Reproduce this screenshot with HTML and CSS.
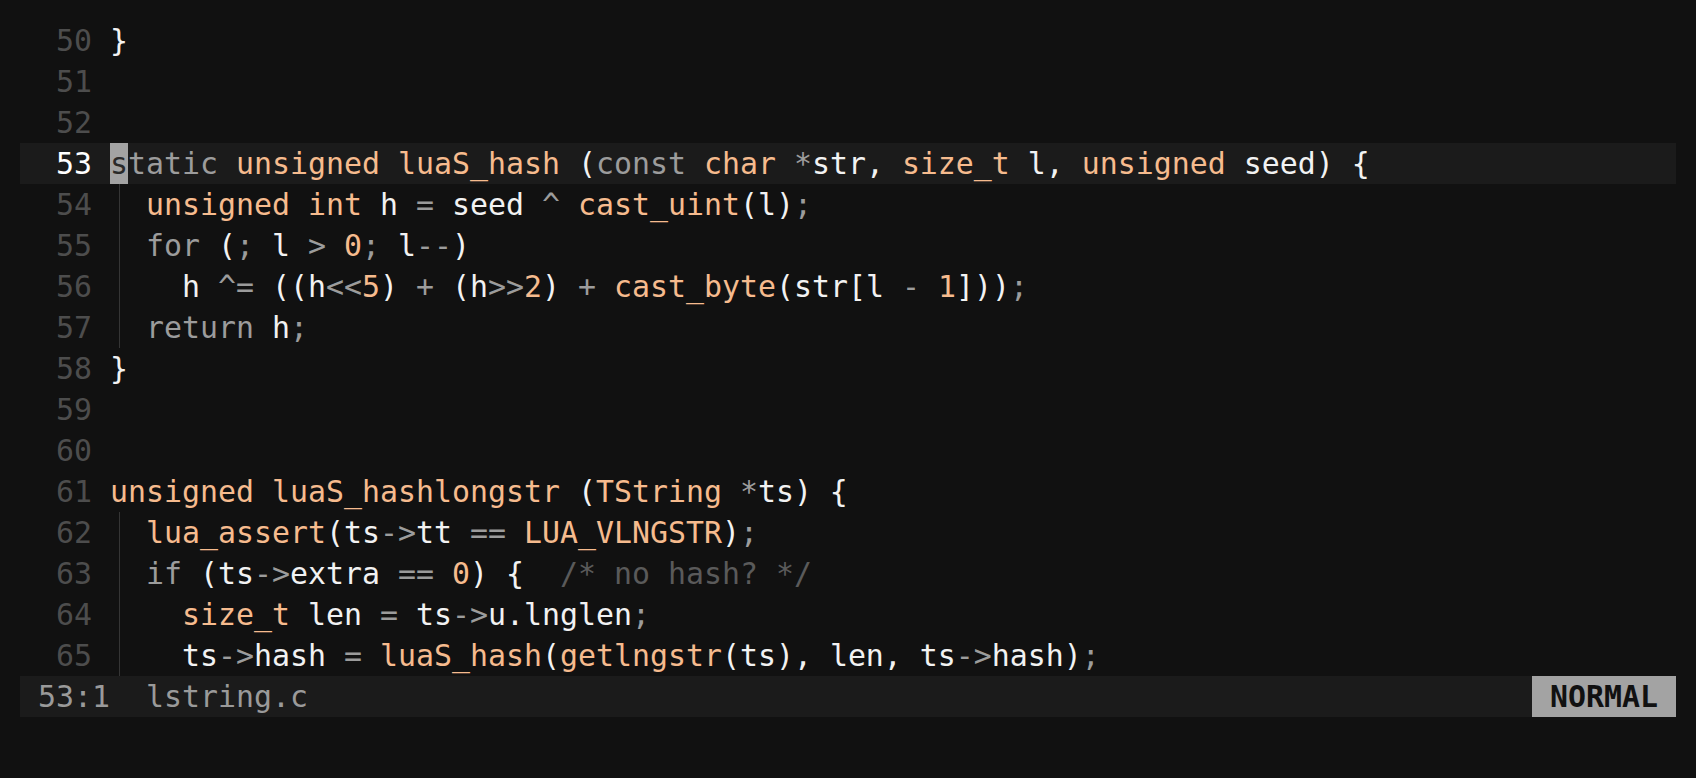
FILE: index.html
```html
<!DOCTYPE html>
<html>
<head>
<meta charset="utf-8">
<link rel="stylesheet" href="styles.css">
</head>
<body>
<div class="editor">
  <div class="buffer">
    <div class="row"><span class="ln">50 </span><span class="code">}</span></div>
    <div class="row"><span class="ln">51 </span><span class="code"></span></div>
    <div class="row"><span class="ln">52 </span><span class="code"></span></div>
    <div class="row current"><span class="ln">53 </span><span class="code"><span class="cur">s</span><span class="k">tatic</span> <span class="t">unsigned</span> <span class="t">luaS_hash</span> (<span class="k">const</span> <span class="t">char</span> <span class="k">*</span>str, <span class="t">size_t</span> l, <span class="t">unsigned</span> seed) {</span></div>
    <div class="row"><span class="ln">54 </span><span class="guide"></span><span class="code"><span class="t">unsigned</span> <span class="t">int</span> h <span class="k">=</span> seed <span class="k">^</span> <span class="t">cast_uint</span>(l)<span class="k">;</span></span></div>
    <div class="row"><span class="ln">55 </span><span class="guide"></span><span class="code"><span class="k">for</span> (<span class="k">;</span> l <span class="k">&gt;</span> <span class="t">0</span><span class="k">;</span> l<span class="k">--</span>)</span></div>
    <div class="row"><span class="ln">56 </span><span class="guide"></span><span class="code">  h <span class="k">^=</span> ((h<span class="k">&lt;&lt;</span><span class="t">5</span>) <span class="k">+</span> (h<span class="k">&gt;&gt;</span><span class="t">2</span>) <span class="k">+</span> <span class="t">cast_byte</span>(str[l <span class="k">-</span> <span class="t">1</span>]))<span class="k">;</span></span></div>
    <div class="row"><span class="ln">57 </span><span class="guide"></span><span class="code"><span class="k">return</span> h<span class="k">;</span></span></div>
    <div class="row"><span class="ln">58 </span><span class="code">}</span></div>
    <div class="row"><span class="ln">59 </span><span class="code"></span></div>
    <div class="row"><span class="ln">60 </span><span class="code"></span></div>
    <div class="row"><span class="ln">61 </span><span class="code"><span class="t">unsigned</span> <span class="t">luaS_hashlongstr</span> (<span class="t">TString</span> <span class="k">*</span>ts) {</span></div>
    <div class="row"><span class="ln">62 </span><span class="guide"></span><span class="code"><span class="t">lua_assert</span>(ts<span class="k">-&gt;</span>tt <span class="k">==</span> <span class="t">LUA_VLNGSTR</span>)<span class="k">;</span></span></div>
    <div class="row"><span class="ln">63 </span><span class="guide"></span><span class="code"><span class="k">if</span> (ts<span class="k">-&gt;</span>extra <span class="k">==</span> <span class="t">0</span>) {  <span class="c">/* no hash? */</span></span></div>
    <div class="row"><span class="ln">64 </span><span class="guide"></span><span class="code">  <span class="t">size_t</span> len <span class="k">=</span> ts<span class="k">-&gt;</span>u.lnglen<span class="k">;</span></span></div>
    <div class="row"><span class="ln">65 </span><span class="guide"></span><span class="code">  ts<span class="k">-&gt;</span>hash <span class="k">=</span> <span class="t">luaS_hash</span>(<span class="t">getlngstr</span>(ts), len, ts<span class="k">-&gt;</span>hash)<span class="k">;</span></span></div>
  </div>
  <div class="status">
    <span class="pos"> 53:1  lstring.c</span>
    <span class="mode"> NORMAL </span>
  </div>
</div>
</body>
</html>
```

FILE: styles.css
```css
html, body {
  margin: 0;
  padding: 0;
  background: #111111;
}

.editor {
  padding: 20px 20px 0 20px;
  font-family: "DejaVu Sans Mono", "Liberation Mono", monospace;
  font-size: 29.9px;
  line-height: 41px;
  color: #f2f2f2;
}

.buffer {
  display: flex;
  flex-direction: column;
}

.row {
  display: flex;
  height: 41px;
  white-space: pre;
}

.row.current {
  background: #1b1b1b;
}

.ln {
  width: 90px;
  flex: none;
  text-align: right;
  color: #4d4d4d;
}

.row.current .ln {
  color: #ffffff;
}

.guide {
  width: 36px;
  flex: none;
  background: linear-gradient(to right, transparent 9px, #353535 9px, #353535 10px, transparent 10px);
}

.code {
  white-space: pre;
}

.cur {
  display: inline-block;
  height: 41px;
  vertical-align: top;
  background: #a3a3a3;
  color: #2a2a2a;
}

.k {
  color: #9c9c9c;
}

.t {
  color: #f6bb8e;
}

.c {
  color: #5a5a5a;
}

.status {
  display: flex;
  justify-content: space-between;
  height: 41px;
  background: #1b1b1b;
  white-space: pre;
}

.pos {
  color: #9a9a9a;
}

.mode {
  background: #a3a3a3;
  color: #111111;
  font-weight: bold;
}
```
